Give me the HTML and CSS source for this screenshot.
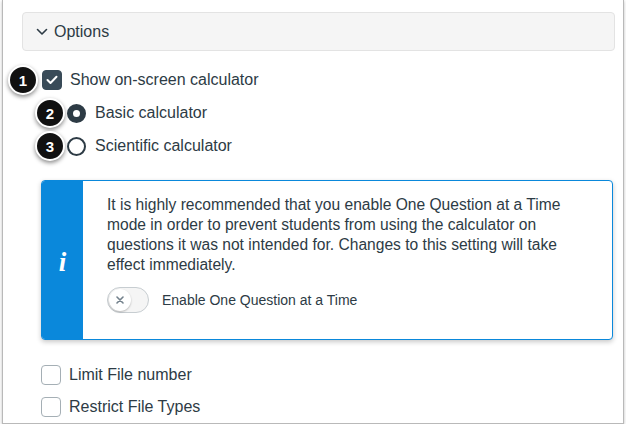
FILE: index.html
```html
<!DOCTYPE html>
<html>
<head>
<meta charset="utf-8">
<link rel="stylesheet" href="styles.css">
</head>
<body>
<div class="frame">
  <div class="options-bar">
    <svg class="chev" width="12" height="8" viewBox="0 0 12 8"><path d="M1.5 1.5 L6 6 L10.5 1.5" fill="none" stroke="#2d3b45" stroke-width="1.6" stroke-linecap="round" stroke-linejoin="round"/></svg>
    <span>Options</span>
  </div>

  <div class="row row-main">
    <span class="badge b1">1</span>
    <span class="cbox checked">
      <svg width="12" height="10" viewBox="0 0 12 10"><path d="M1.5 5 L4.5 8 L10.5 1.8" fill="none" stroke="#fff" stroke-width="2" stroke-linecap="round" stroke-linejoin="round"/></svg>
    </span>
    <span class="label">Show on-screen calculator</span>
  </div>
  <div class="row row-radio">
    <span class="badge b2">2</span>
    <span class="radio selected"></span>
    <span class="label">Basic calculator</span>
  </div>
  <div class="row row-radio">
    <span class="badge b3">3</span>
    <span class="radio"></span>
    <span class="label">Scientific calculator</span>
  </div>

  <div class="alert">
    <div class="alert-icon"><span>i</span></div>
    <div class="alert-body">
      <p>It is highly recommended that you enable One Question at a Time mode in order to prevent students from using the calculator on questions it was not intended for. Changes to this setting will take effect immediately.</p>
      <div class="toggle-row">
        <span class="toggle"><span class="knob">
          <svg width="8" height="8" viewBox="0 0 8 8"><path d="M1 1 L7 7 M7 1 L1 7" stroke="#73818c" stroke-width="1.6" stroke-linecap="round"/></svg>
        </span></span>
        <span class="toggle-label">Enable One Question at a Time</span>
      </div>
    </div>
  </div>

  <div class="row row-bottom first">
    <span class="cbox"></span>
    <span class="label">Limit File number</span>
  </div>
  <div class="row row-bottom">
    <span class="cbox"></span>
    <span class="label">Restrict File Types</span>
  </div>
</div>
</body>
</html>
```

FILE: styles.css
```css
html, body {
  margin: 0;
  padding: 0;
  background: #fff;
}
body {
  font-family: "Liberation Sans", Arial, sans-serif;
  color: #2d3b45;
}
.frame {
  box-sizing: border-box;
  margin-left: 2px;
  width: 622px;
  height: 424px;
  border: 1px solid #b9b9b9;
  border-top: none;
  box-shadow: 0 1px 3px rgba(0,0,0,0.25);
  padding: 12px 8px 0 19px;
  background: #fff;
}
.options-bar {
  box-sizing: border-box;
  height: 39px;
  width: 593px;
  background: #f5f5f5;
  border: 1px solid #e3e3e3;
  border-radius: 4px;
  display: flex;
  align-items: center;
  padding-left: 13px;
  padding-top: 1px;
  font-size: 16px;
}
.chev {
  margin-right: 6px;
}
.row {
  position: relative;
  display: flex;
  align-items: center;
  font-size: 16px;
}
.row-main {
  margin-top: 19px;
  padding-left: 20px;
  height: 20px;
}
.row-radio {
  margin-top: 13px;
  padding-left: 45px;
  height: 20px;
}
.cbox {
  box-sizing: border-box;
  width: 20px;
  height: 20px;
  border: 1px solid #a5afb5;
  border-radius: 4px;
  background: #fff;
  display: flex;
  align-items: center;
  justify-content: center;
  flex: none;
}
.cbox.checked {
  background: #394b58;
  border-color: #394b58;
}
.radio {
  box-sizing: border-box;
  width: 19px;
  height: 19px;
  border-radius: 50%;
  border: 2px solid #2d3b45;
  background: #fff;
  flex: none;
}
.radio.selected {
  border: 6px solid #2d3b45;
}
.label {
  margin-left: 8px;
}
.row-radio .label {
  margin-left: 9px;
}
.badge {
  position: absolute;
  top: 50%;
  box-sizing: border-box;
  width: 30px;
  height: 30px;
  margin-top: -15px;
  border-radius: 50%;
  background: #111;
  border: 2px solid #fff;
  box-shadow: 0 2px 4px rgba(0,0,0,0.45);
  color: #fff;
  font-weight: bold;
  font-size: 15px;
  display: flex;
  align-items: center;
  justify-content: center;
}
.b1 { left: -14px; }
.b2 { left: 13px; }
.b3 { left: 13px; }
.alert {
  box-sizing: border-box;
  margin-top: 24px;
  margin-left: 19px;
  width: 572px;
  height: 160px;
  border: 1px solid #0a88db;
  border-radius: 4px;
  display: flex;
  overflow: hidden;
  box-shadow: 0 2px 5px rgba(0,0,0,0.22);
  background: #fff;
}
.alert-icon {
  width: 41px;
  flex: none;
  background: #0a88db;
  display: flex;
  align-items: center;
  justify-content: center;
  color: #fff;
  font-family: "Liberation Serif", "Times New Roman", serif;
  font-style: italic;
  font-weight: bold;
  font-size: 27px;
  padding-top: 4px;
}
.alert-body {
  padding: 14px 20px 0 24px;
}
.alert-body p {
  margin: 0;
  font-size: 15.6px;
  line-height: 20px;
}
.toggle-row {
  display: flex;
  align-items: center;
  margin-top: 12px;
}
.toggle {
  box-sizing: border-box;
  width: 42px;
  height: 26px;
  border-radius: 13px;
  border: 1px solid #c7cdd1;
  background: #f5f5f5;
  display: flex;
  align-items: center;
  padding-left: 1px;
}
.knob {
  width: 22px;
  height: 22px;
  border-radius: 50%;
  background: #fff;
  box-shadow: 0 1px 2px rgba(0,0,0,0.25);
  display: flex;
  align-items: center;
  justify-content: center;
}
.toggle-label {
  margin-left: 13px;
  font-size: 14px;
}
.row-bottom {
  padding-left: 19px;
  height: 20px;
  margin-top: 12px;
}
.row-bottom.first {
  margin-top: 25px;
}
```
